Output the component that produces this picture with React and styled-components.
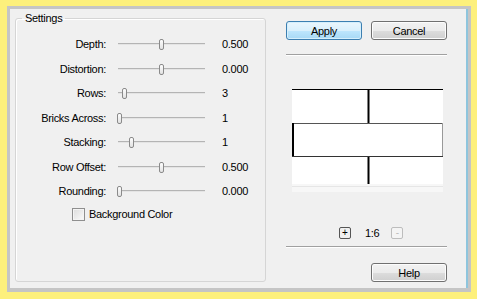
import { createGlobalStyle } from "styled-components";
import styled from "styled-components";

const GlobalStyle = createGlobalStyle`
  html, body {
    margin: 0;
    padding: 0;
    background: #fdf07c;
  }
  body {
    font-family: Tahoma, "Liberation Sans", Arial, sans-serif;
    font-size: 11px;
    letter-spacing: -0.3px;
    color: #000;
  }
`;

const Page = styled.div`
  width: 477px;
  height: 299px;
  padding: 6px 6px 7px 7px;
  box-sizing: border-box;
`;

const Window = styled.div`
  height: 100%;
  box-sizing: border-box;
  border: 3px solid #c5c5c5;
  border-bottom-width: 4px;
  background: #f0f0f0;
  box-shadow: inset -2px 0 0 #8ec5dd;
  display: flex;
  padding: 3px 0 6px 5px;
`;

const Group = styled.fieldset`
  margin: 0;
  padding: 0;
  width: 251px;
  box-sizing: border-box;
  border: 1px solid #d5d5d5;
  border-radius: 3px;
  box-shadow: inset 1px 1px 0 #fff;
`;

const Legend = styled.legend`
  margin-left: 6px;
  padding: 0 3px;
  line-height: 13px;
`;

const Rows = styled.div`
  padding-top: 7px;
`;

const Row = styled.div`
  display: grid;
  grid-template-columns: 90px 87px auto;
  column-gap: 12px;
  align-items: center;
  height: 24.5px;
`;

const Label = styled.span`
  text-align: right;
`;

const Value = styled.span`
  padding-left: 5px;
`;

const Track = styled.div`
  position: relative;
  height: 10px;
  &::before {
    content: "";
    position: absolute;
    left: 0;
    right: 0;
    top: 4px;
    height: 1px;
    background: #b4b4b4;
    border-bottom: 1px solid #e4e4e4;
  }
`;

const Thumb = styled.div`
  position: absolute;
  top: 0;
  width: 3px;
  height: 9px;
  margin-left: -3px;
  border: 1px solid #8a8a8a;
  border-radius: 2px;
  background: linear-gradient(#fdfdfd, #e2e2e2);
`;

const CheckRow = styled.label`
  display: flex;
  align-items: center;
  gap: 4px;
  margin: 4px 0 0 56px;
`;

const Box = styled.span`
  width: 11px;
  height: 11px;
  border: 1px solid #8f8f8f;
  background: linear-gradient(135deg, #dcdcdc, #fbfbfb);
  box-shadow: inset 0 0 0 1px #f4f4f4;
`;

const Side = styled.div`
  display: flex;
  flex-direction: column;
  width: 161px;
  margin-left: 20px;
  padding-top: 9px;
`;

const ButtonRow = styled.div`
  display: flex;
  justify-content: space-between;
`;

const Button = styled.button`
  width: 76px;
  height: 19px;
  padding: 0;
  font: inherit;
  letter-spacing: inherit;
  color: #000;
  border-radius: 3px;
  border: 1px solid ${(p) => (p.$primary ? "#3c7fb1" : "#707070")};
  background: ${(p) =>
    p.$primary
      ? "linear-gradient(#eaf6fd 0%, #d9f0fc 50%, #bee6fd 51%, #a7d9f5 100%)"
      : "linear-gradient(#f2f2f2 0%, #ebebeb 50%, #dddddd 51%, #cfcfcf 100%)"};
  box-shadow: inset 0 0 0 1px ${(p) => (p.$primary ? "#d5effc" : "#fcfcfc")};
  align-self: ${(p) => (p.$end ? "flex-end" : "auto")};
  margin-top: ${(p) => p.$top || 0}px;
`;

const Rule = styled.div`
  height: 1px;
  width: 161px;
  background: #a0a0a0;
  border-bottom: 1px solid #fff;
  margin-top: ${(p) => p.$top}px;
`;

const Preview = styled.svg`
  display: block;
  margin: 33px 0 0 6px;
`;

const Zoom = styled.div`
  display: flex;
  align-items: center;
  margin: 35px 0 0 53px;
  height: 12px;
`;

const ZoomBtn = styled.span`
  width: 10px;
  height: 10px;
  border: 1px solid ${(p) => (p.$off ? "#bdbdbd" : "#555")};
  border-radius: 2px;
  color: ${(p) => (p.$off ? "#bdbdbd" : "#000")};
  background: ${(p) => (p.$off ? "#f4f4f4" : "#f0f0f0")};
  font-size: 10px;
  line-height: 9px;
  text-align: center;
  letter-spacing: 0;
`;

const Ratio = styled.span`
  margin: 0 12px 0 14px;
`;

const sliders = [
  { label: "Depth:", pos: 44, value: "0.500" },
  { label: "Distortion:", pos: 44, value: "0.000" },
  { label: "Rows:", pos: 7, value: "3" },
  { label: "Bricks Across:", pos: 2, value: "1" },
  { label: "Stacking:", pos: 14, value: "1" },
  { label: "Row Offset:", pos: 44, value: "0.500" },
  { label: "Rounding:", pos: 2, value: "0.000" },
];

const Bricks = () => (
  <Preview width="151" height="103" viewBox="0 0 151 103">
    <rect x="0" y="0" width="151" height="95" fill="#fff" />
    <line x1="0" y1="0.5" x2="151" y2="0.5" stroke="#000" />
    <line x1="76.5" y1="0" x2="76.5" y2="34" stroke="#000" strokeWidth="2" />
    <line x1="0" y1="34.5" x2="151" y2="34.5" stroke="#555" />
    <line x1="1" y1="34" x2="1" y2="68" stroke="#000" strokeWidth="2" />
    <line x1="150.5" y1="34" x2="150.5" y2="68" stroke="#999" />
    <line x1="0" y1="67.5" x2="151" y2="67.5" stroke="#333" />
    <line x1="76.5" y1="68" x2="76.5" y2="95" stroke="#000" strokeWidth="2" />
    <rect x="0" y="95" width="151" height="8" fill="#f7f7f7" />
    <line x1="0" y1="97.5" x2="151" y2="97.5" stroke="#e6e6e6" />
  </Preview>
);

export default function App() {
  return (
    <Page>
      <GlobalStyle />
      <Window>
        <Group>
          <Legend>Settings</Legend>
          <Rows>
            {sliders.map((s) => (
              <Row key={s.label}>
                <Label>{s.label}</Label>
                <Track>
                  <Thumb style={{ left: s.pos }} />
                </Track>
                <Value>{s.value}</Value>
              </Row>
            ))}
          </Rows>
          <CheckRow>
            <Box />
            Background Color
          </CheckRow>
        </Group>
        <Side>
          <ButtonRow>
            <Button $primary>Apply</Button>
            <Button>Cancel</Button>
          </ButtonRow>
          <Rule $top={14} />
          <Bricks />
          <Zoom>
            <ZoomBtn>+</ZoomBtn>
            <Ratio>1:6</Ratio>
            <ZoomBtn $off>-</ZoomBtn>
          </Zoom>
          <Rule $top={7} />
          <Button $end $top={15}>Help</Button>
        </Side>
      </Window>
    </Page>
  );
}
